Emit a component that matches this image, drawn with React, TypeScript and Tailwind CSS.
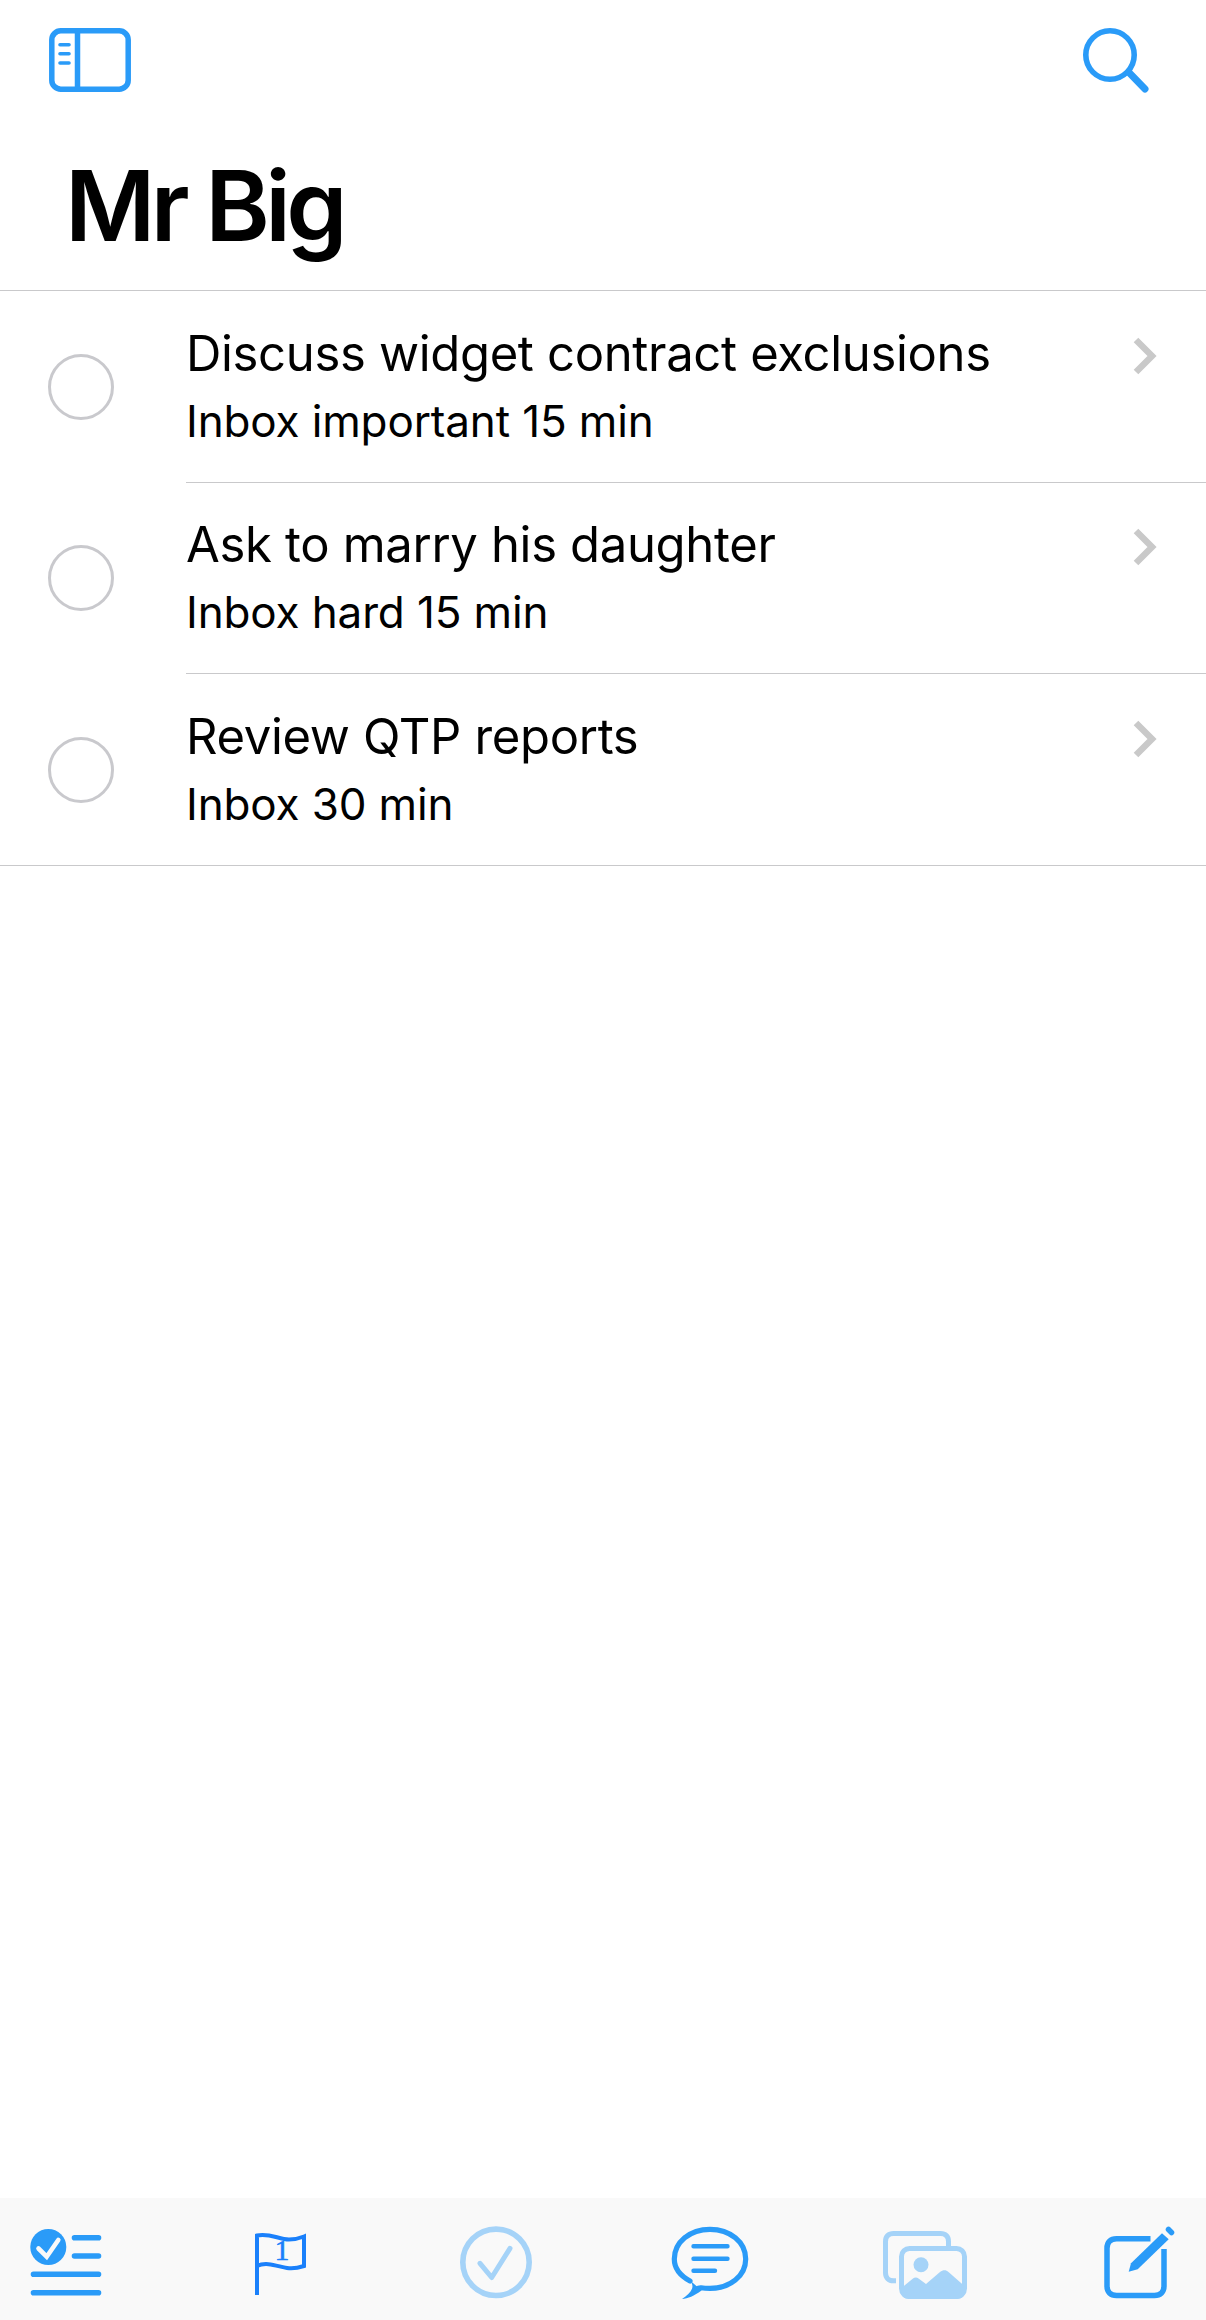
import React from 'react';

const tasks = [
  { title: 'Discuss widget contract exclusions', detail: 'Inbox important 15 min' },
  { title: 'Ask to marry his daughter', detail: 'Inbox hard 15 min' },
  { title: 'Review QTP reports', detail: 'Inbox 30 min' },
];

function SidebarIcon() {
  return (
    <svg width="84" height="66" viewBox="0 0 84 66" fill="none" stroke="#2a9bf8" strokeLinecap="round">
      <rect x="3.8" y="3.8" width="76.4" height="58.4" rx="9" strokeWidth="5.5" />
      <path d="M29.5 4V62" strokeWidth="5.5" strokeLinecap="butt" />
      <path d="M12 17.7H21M12 26.7H21M12 36H21" strokeWidth="3.6" />
    </svg>
  );
}

function SearchIcon() {
  return (
    <svg width="68" height="68" viewBox="0 0 68 68" fill="none" stroke="#2a9bf8" strokeLinecap="round">
      <circle cx="28" cy="28" r="24.2" strokeWidth="5.6" />
      <path d="M47 45.5L63 62" strokeWidth="7" />
    </svg>
  );
}

function Chevron() {
  return (
    <svg width="24" height="38" viewBox="0 0 24 38" fill="none" stroke="#c9c9c9" strokeWidth="6.5">
      <path d="M3 3L19 19L3 35" />
    </svg>
  );
}

function ListIcon() {
  return (
    <svg width="88" height="88" viewBox="0 0 88 88" fill="none" stroke="#2a9bf8" strokeLinecap="round" strokeWidth="5.6">
      <circle cx="26.3" cy="27" r="18" fill="#2a9bf8" stroke="none" />
      <path d="M16.5 28.5L24.7 36.7L36.3 20" stroke="#f9f9f9" strokeWidth="4.6" />
      <path d="M52.5 17.7H76.5M52.5 36H76.5M11.5 54.3H76.5M11.5 72.8H76.5" />
    </svg>
  );
}

function FlagIcon() {
  return (
    <svg width="88" height="88" viewBox="0 0 88 88" fill="none" stroke="#1a80fb" strokeWidth="4">
      <path d="M20 75V15.5C32 12.5 42 19.5 52 19.5C57 19.5 62 18.5 67 16.5V46C61 48 56 49 50 48C42 47 30 41 20 46" />
      <text x="45" y="40" textAnchor="middle" fontFamily="'Liberation Serif', serif" fontSize="29" fill="#1a80fb" stroke="#1a80fb" strokeWidth="0.7">
        1
      </text>
    </svg>
  );
}

function CheckIcon() {
  return (
    <svg width="88" height="88" viewBox="0 0 88 88" fill="none" stroke="#a5d3f8" strokeLinecap="round" strokeLinejoin="round">
      <circle cx="44" cy="42.3" r="33.2" strokeWidth="5.6" />
      <path d="M28 43.3L39.7 57.5L58 28.3" strokeWidth="5" />
    </svg>
  );
}

function BubbleIcon() {
  return (
    <svg width="88" height="88" viewBox="0 0 88 88" fill="none" stroke="#2a9bf8" strokeLinecap="round" strokeWidth="5.2">
      <path d="M24 61C13 55 8.3 47 8.3 39C8.3 22 24 9.3 44 9.3C64 9.3 79.7 22 79.7 39C79.7 56 64 68.4 44 68.4C40.5 68.4 37.5 68.2 35 67.8C33 67.6 31.5 68.4 30 69.4" />
      <path d="M23 59.5C26.5 63 27 66 26 68.8C24.5 72.5 21 76 16 79C22 78.5 28 76 35.5 70.5Z" fill="#2a9bf8" stroke="none" />
      <path d="M27.5 26.3H61.5M27.5 38.7H61.5M27.5 50.7H49" strokeWidth="4.4" />
    </svg>
  );
}

function PhotosIcon() {
  return (
    <svg width="88" height="88" viewBox="0 0 88 88" fill="none" stroke="#a5d3f8" strokeWidth="5">
      <path d="M15 60.8H12.5C7.5 60.8 4.5 57.8 4.5 52.8V21.5C4.5 16.5 7.5 13.5 12.5 13.5H59.5C64.5 13.5 67.5 16.5 67.5 21.5V26" />
      <rect x="20.5" y="28.5" width="63" height="48" rx="8" />
      <circle cx="40" cy="44.7" r="7.5" fill="#a5d3f8" stroke="none" />
      <path
        d="M21 67.5L32 58.5C33.5 57 36 57 37.5 58.5L45 64L59 52C62 49.5 65 49.5 67.5 52L84 66.5V71C84 76 81 79 76 79H28C23 79 20 76 20 71Z"
        fill="#a5d3f8"
        stroke="none"
      />
    </svg>
  );
}

function ComposeIcon() {
  return (
    <svg width="88" height="88" viewBox="0 0 88 88" fill="none" stroke="#2a9bf8" strokeLinecap="round">
      <path
        d="M54.5 18.8H20.5C14.5 18.8 11 22.3 11 28.3V66C11 72 14.5 75.5 20.5 75.5H58.5C64.5 75.5 68 72 68 66V29"
        strokeWidth="5.5"
        strokeLinecap="butt"
      />
      <path d="M35 43.3L66 13.3L72.7 19.3L41.7 49.3L32.7 51.7Z" fill="#2a9bf8" stroke="none" />
      <path d="M72.5 9.5L75.5 12.5" strokeWidth="5.5" />
    </svg>
  );
}

export default function App() {
  return (
    <div className="flex h-[2320px] flex-col bg-white font-['Inter','Liberation_Sans',sans-serif] text-black">
      <header className="h-[291px] border-b border-[#c9c9cb]">
        <div className="flex items-start justify-between pl-[48px] pr-[56px] pt-[27px]">
          <SidebarIcon />
          <SearchIcon />
        </div>
        <h1 className="ml-[65px] mt-[51px] text-[98px] font-semibold leading-[120px] tracking-[-4.6px]">Mr Big</h1>
      </header>

      <ul>
        {tasks.map((task, i) => (
          <li key={task.title} className={`flex h-[191.67px] items-center pl-[48px] ${i === 2 ? 'border-b border-[#c9c9cb]' : ''}`}>
            <div className="h-[66px] w-[66px] shrink-0 rounded-full border-[3px] border-[#c9c9cd]" />
            <div className={`ml-[72px] flex h-full flex-1 items-start justify-between pr-[49px] pt-[32.5px] ${i === 2 ? '' : 'border-b border-[#c9c9cb]'}`}>
              <div>
                <div className="text-[49px] leading-[60px] tracking-[-0.33px]">{task.title}</div>
                <div className="mt-[11px] text-[44px] leading-[52px] tracking-[-0.14px]">{task.detail}</div>
              </div>
              <div className="mt-[13px]">
                <Chevron />
              </div>
            </div>
          </li>
        ))}
      </ul>

      <div className="flex-1" />

      <nav className="flex h-[122px] items-start justify-between bg-[#f9f9f9] px-[22px] pt-[22px]">
        <ListIcon />
        <FlagIcon />
        <CheckIcon />
        <BubbleIcon />
        <PhotosIcon />
        <ComposeIcon />
      </nav>
    </div>
  );
}
